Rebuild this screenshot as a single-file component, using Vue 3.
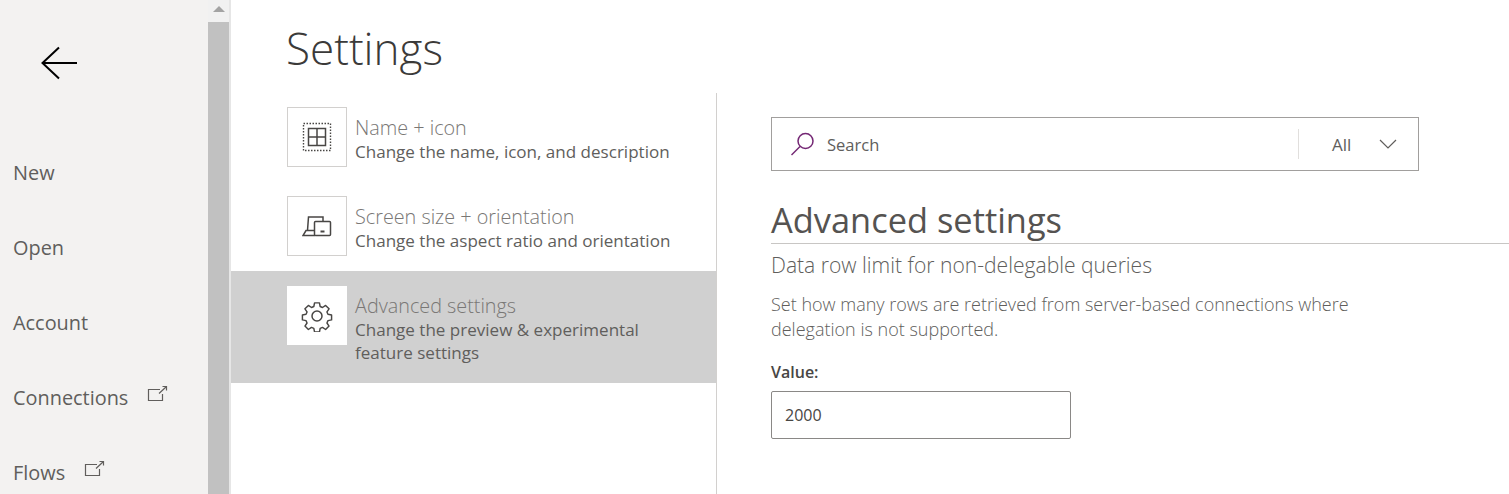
<template>
  <div class="page">
    <aside class="sidebar">
      <div class="nav">
        <button class="back" aria-label="Back">
          <svg width="38" height="34" viewBox="0 0 38 34"><path d="M19 1.5 2.5 17 19 32.5M2.5 17H37" fill="none" stroke="#000" stroke-width="2"/></svg>
        </button>
        <ul class="menu">
          <li v-for="item in menu" :key="item.label" class="menu-item">
            <span>{{ item.label }}</span>
            <svg v-if="item.external" class="ext" width="21" height="17" viewBox="0 0 21 17"><path d="M13 4.5H1.5v11h14V9M12 8.5 19.5 1.500M15.500 1.500h4v4" fill="none" stroke="#605e5c" stroke-width="1.200"/></svg>
          </li>
        </ul>
      </div>
      <div class="scrollbar">
        <div class="arrow"><i></i></div>
        <div class="thumb"></div>
      </div>
    </aside>
    <main class="main">
      <h1 class="title">Settings</h1>
      <div class="panes">
        <div class="list">
          <div v-for="(opt, i) in options" :key="opt.title" class="option" :class="{ active: opt.active }">
            <div class="tile">
              <svg v-if="i === 0" width="30" height="30" viewBox="0 0 30 30">
                <rect x="1.500" y="1.500" width="27" height="27" fill="none" stroke="#484644" stroke-width="1.400" stroke-dasharray="1.500 1.500"/>
                <path d="M6.500 6.500h17v17h-17zM15 6.500v17M6.500 15h17" fill="none" stroke="#484644" stroke-width="1.500"/>
              </svg>
              <svg v-else-if="i === 1" width="30" height="22" viewBox="0 0 30 22">
                <path d="M5.500 15.500 6.500 2h14.500v4M13 20.500H1l3-5h9" fill="none" stroke="#484644" stroke-width="1.500"/>
                <rect x="12.500" y="6.500" width="16" height="14" rx="1" fill="none" stroke="#484644" stroke-width="1.500"/>
                <path d="M18.500 16.500h4" stroke="#484644" stroke-width="2"/>
              </svg>
              <svg v-else width="32" height="32" viewBox="0 0 32 32">
                <path d="M13.300 1.500h5.400l.8 4 2.600 1.100 3.400-2.300 3.800 3.800-2.300 3.400 1.100 2.600 4 .8v5.400l-4 .8-1.100 2.600 2.300 3.400-3.800 3.800-3.400-2.300-2.600 1.100-.8 4h-5.400l-.8-4-2.600-1.100-3.400 2.300-3.800-3.800 2.300-3.400-1.100-2.600-4-.8v-5.400l4-.8 1.100-2.600-2.300-3.400 3.800-3.800 3.400 2.300 2.600-1.100z" transform="translate(1.500 1.500) scale(.906)" fill="none" stroke="#484644" stroke-width="1.600" stroke-linejoin="round"/>
                <circle cx="16" cy="16" r="5" fill="none" stroke="#484644" stroke-width="1.500"/>
              </svg>
            </div>
            <div class="option-text">
              <div class="option-title">{{ opt.title }}</div>
              <div class="option-desc">{{ opt.desc }}</div>
            </div>
          </div>
        </div>
        <section class="detail">
          <div class="search">
            <svg class="search-icon" width="26" height="26" viewBox="0 0 26 26"><circle cx="15.500" cy="10" r="7.500" fill="none" stroke="#742774" stroke-width="1.500"/><path d="M10 15.500 1.500 24" stroke="#742774" stroke-width="1.500"/></svg>
            <span class="search-text">Search</span>
            <div class="filter">
              <span class="all">All</span>
              <svg width="18" height="10" viewBox="0 0 18 10"><path d="M1 1l8 8 8-8" fill="none" stroke="#605e5c" stroke-width="1.200"/></svg>
            </div>
          </div>
          <h2 class="heading">Advanced settings</h2>
          <h3 class="sub">Data row limit for non-delegable queries</h3>
          <p class="para">Set how many rows are retrieved from server-based connections where delegation is not supported.</p>
          <label class="label">Value:</label>
          <div class="input">2000</div>
        </section>
      </div>
    </main>
  </div>
</template>

<script setup>
const menu = [
  { label: 'New' },
  { label: 'Open' },
  { label: 'Account' },
  { label: 'Connections', external: true },
  { label: 'Flows', external: true },
]
const options = [
  { title: 'Name + icon', desc: 'Change the name, icon, and description' },
  { title: 'Screen size + orientation', desc: 'Change the aspect ratio and orientation' },
  { title: 'Advanced settings', desc: 'Change the preview & experimental feature settings', active: true },
]
</script>

<style>
html, body { margin: 0; overflow: hidden; background: #fff; }
</style>

<style scoped>
.page {
  display: flex;
  width: 1509px;
  height: 494px;
  overflow: hidden;
  font-family: "Open Sans", "Noto Sans", sans-serif;
  color: #323130;
}
.sidebar {
  display: flex;
  flex: 0 0 229px;
  background: #f3f2f1;
  border-right: 2px solid #e6e6e6;
}
.nav { flex: 0 0 208px; }
.back {
  display: block;
  margin: 46px 0 0 40px;
  padding: 0;
  border: 0;
  background: none;
  height: 34px;
}
.back svg { display: block; }
.menu { list-style: none; margin: 80px 0 0; padding: 0; }
.menu-item {
  display: flex;
  align-items: flex-start;
  height: 75px;
  padding-left: 13px;
  font-size: 19.900px;
  line-height: 26px;
  color: #605e5c;
}
.ext { margin: 0 0 0 19px; }
.scrollbar { flex: 0 0 21px; display: flex; flex-direction: column; background: #f1f1f1; }
.arrow { height: 22px; display: flex; justify-content: center; padding-top: 6px; box-sizing: border-box; }
.arrow i { width: 0; height: 0; border: 6px solid transparent; border-top: 0; border-bottom-color: #a3a3a3; }
.thumb { flex: 1; background: #c1c1c1; }
.main { flex: 1; min-width: 0; }
.title {
  margin: 0;
  padding: 19px 0 0 55px;
  height: 74px;
  box-sizing: border-box;
  font-size: 44px;
  line-height: 58px;
  font-weight: 300;
  color: #3b3a39;
}
.panes { display: flex; margin-top: 19px; height: 401px; }
.list { flex: 0 0 486px; padding-top: 14px; box-sizing: border-box; border-right: 1px solid #d2d0ce; }
.option { display: flex; gap: 8px; padding-left: 56px; height: 89px; box-sizing: border-box; }
.option.active { height: 112px; background: #d0d0d0; padding-top: 15px; margin-top: -14px; }
.tile {
  flex: 0 0 60px;
  height: 60px;
  box-sizing: border-box;
  display: flex;
  align-items: center;
  justify-content: center;
  background: #fff;
  border: 1px solid #d2d0ce;
}
.active .tile { border-color: #fff; height: 59px; }
.option-text { padding-top: 10px; }
.option-title { font-size: 19.800px; line-height: 22px; margin-bottom: 1px; font-weight: 300; color: #797775; }
.option-desc { font-size: 17.050px; line-height: 23px; color: #605e5c; width: 320px; }
.active .option-text { padding-top: 8px; }
.active .option-title { line-height: 24px; margin-bottom: 0; }
.detail { flex: 1; min-width: 0; padding: 24px 0 0 54px; }
.search {
  display: flex;
  align-items: center;
  width: 648px;
  height: 54px;
  box-sizing: border-box;
  border: 1px solid #a19f9d;
  padding-left: 18px;
}
.search-text { margin-left: 11px; font-size: 16.500px; color: #605e5c; flex: 1; }
.filter {
  display: flex;
  align-items: center;
  width: 120px;
  height: 30px;
  box-sizing: border-box;
  border-left: 1px solid #e1dfdd;
  padding-left: 33px;
  gap: 28px;
}
.all { font-size: 17px; color: #605e5c; }
.heading {
  margin: 28px 0 0;
  font-size: 34.400px;
  line-height: 42px;
  font-weight: 400;
  color: #555351;
  border-bottom: 1px solid #c8c6c4;
  height: 45px;
  box-sizing: border-box;
}
.sub { margin: 7px 0 0; font-size: 21.100px; line-height: 28px; font-weight: 300; color: #605e5c; }
.para { margin: 13px 0 0; width: 600px; font-size: 18px; line-height: 25px; font-weight: 300; color: #605e5c; }
.label { display: block; margin-top: 19px; font-size: 16px; line-height: 22px; font-weight: 600; color: #484644; }
.input {
  margin-top: 8px;
  width: 300px;
  height: 48px;
  box-sizing: border-box;
  border: 1px solid #8a8886;
  border-radius: 2px;
  padding-left: 13px;
  font-size: 16px;
  line-height: 46px;
  color: #484644;
}
</style>
